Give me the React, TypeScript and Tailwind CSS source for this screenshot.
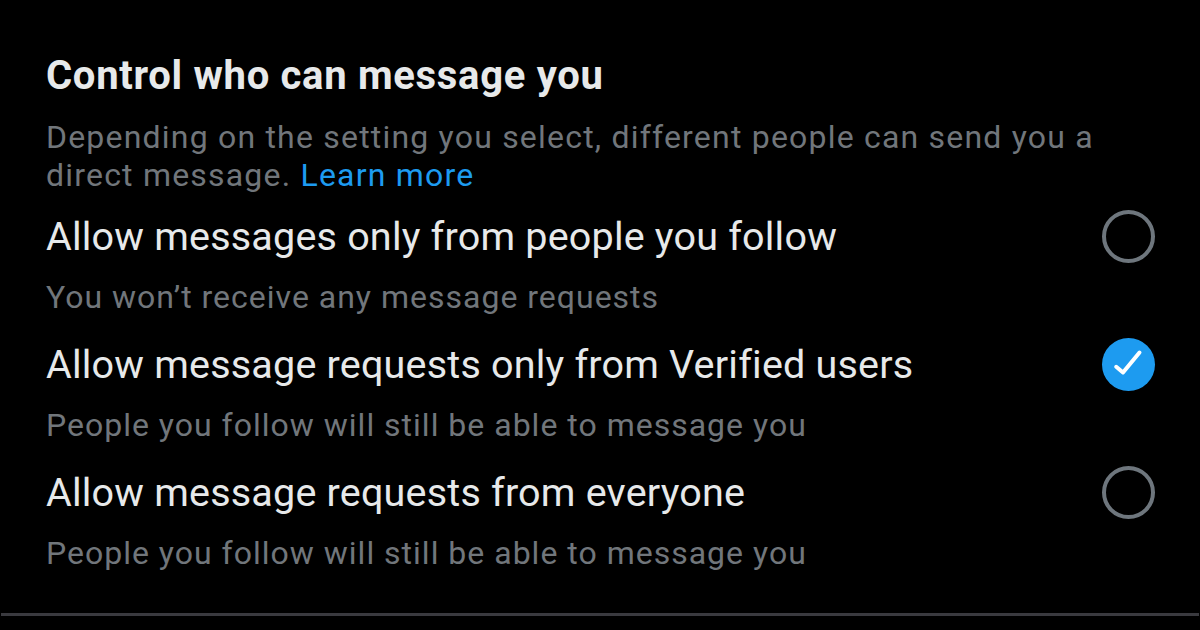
import React from "react";

const rows = [
  { title: "Allow messages only from people you follow", sub: "You won\u2019t receive any message requests", checked: false },
  { title: "Allow message requests only from Verified users", sub: "People you follow will still be able to message you", checked: true },
  { title: "Allow message requests from everyone", sub: "People you follow will still be able to message you", checked: false },
];

function Radio({ checked }: { checked: boolean }) {
  if (checked) {
    return (
      <div className="w-[53px] h-[53px] rounded-full bg-[#1d9bf0] flex items-center justify-center">
        <svg width="53" height="53" viewBox="0 0 53 53" fill="none">
          <path d="M14.2 28.8l6.8 5.7L37.5 14.5" stroke="white" strokeWidth="4" strokeLinecap="round" strokeLinejoin="round" />
        </svg>
      </div>
    );
  }
  return <div className="w-[53px] h-[53px] rounded-full border-[4px] border-[#6e767d]" />;
}

export default function App() {
  return (
    <div className="w-[1200px] h-[630px] bg-black overflow-hidden flex flex-col" style={{ fontFamily: "Roboto, 'Open Sans', sans-serif" }}>
      <div className="px-[46px] pt-[54px]">
        <div className="text-[#e7e9ea] font-bold text-[40px] leading-[44px] tracking-[0.7px]">Control who can message you</div>
        <div className="text-[#71767b] text-[32px] leading-[38px] tracking-[1.2px] mt-[20px] whitespace-nowrap">
          Depending on the setting you select, different people can send you a
          <br />
          direct message. <span className="text-[#1d9bf0]">Learn more</span>
        </div>
        <div className="flex flex-col gap-[24px] mt-[19px]">
          {rows.map((r) => (
            <div key={r.title} className="flex items-start">
              <div className="flex-1 flex flex-col gap-[16px]">
                <div className="text-[#e7e9ea] text-[39.5px] leading-[48px] tracking-[0.2px]">{r.title}</div>
                <div className="text-[#71767b] text-[32px] leading-[40px] tracking-[1px]">{r.sub}</div>
              </div>
              <div className="mt-[-3px] mr-[-1px]">
                <Radio checked={r.checked} />
              </div>
            </div>
          ))}
        </div>
      </div>
      <div className="mt-[40px] h-[3px] bg-[#3a3a3f] mx-[1px]" />
    </div>
  );
}
